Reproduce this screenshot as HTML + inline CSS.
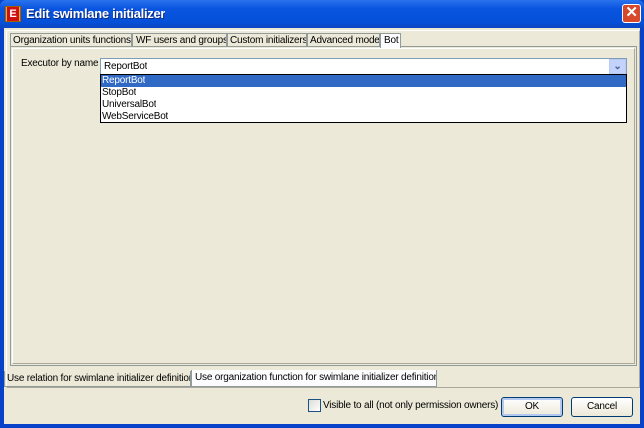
<!DOCTYPE html>
<html><head><style>
*{margin:0;padding:0;box-sizing:border-box}
body{width:644px;height:428px;overflow:hidden;background:#0842c8;font-family:"Liberation Sans",sans-serif;font-size:10px;letter-spacing:-0.2px;color:#000;position:relative}
div{position:absolute}
.t{white-space:nowrap;overflow:hidden}
</style></head><body>
<div style="left:0;top:0;width:644px;height:28px;background:linear-gradient(#2a73ee,#0a55e0 30%,#0550d8 80%,#0a46c0);border-radius:6px 6px 0 0"></div>
<div style="left:5px;top:6px;width:16px;height:16px;background:#e8b020;border:1px solid #a06000"></div>
<div style="left:7px;top:7px;width:12px;height:14px;background:#d01010;color:#fff;font-weight:bold;font-size:11px;text-align:center;line-height:14px">E</div>
<div class="t" style="left:26px;top:6px;color:#fff;font-weight:bold;font-size:13px;letter-spacing:-0.3px;text-shadow:1px 1px #0a2a80">Edit swimlane initializer</div>
<div style="left:622px;top:4px;width:19px;height:19px;background:#d8482a;border:1px solid #fff;border-radius:3px;color:#fff;font-weight:bold;font-size:15px;text-align:center;line-height:16px">✕</div>
<div style="left:4px;top:28px;width:636px;height:396px;background:#ece9d8"></div>
<div style="left:6px;top:30px;width:634px;height:358px;border:1px solid #fff;border-right-color:#aca899;border-bottom-color:#aca899"></div>
<div style="left:10px;top:46px;width:627px;height:320px;border:1px solid #919b9c;background:#ece9d8"></div>
<div style="left:12px;top:48px;width:623px;height:316px;border:1px solid #fff;border-right-color:#aca899;border-bottom-color:#aca899"></div>
<div class="t" style="left:10px;top:33px;height:14px;width:122px;border:1px solid #919b9c;border-bottom:none;padding:0 2px;line-height:13px">Organization units functions</div>
<div class="t" style="left:132px;top:33px;height:14px;width:95px;border:1px solid #919b9c;border-bottom:none;padding:0 3px;line-height:13px">WF users and groups</div>
<div class="t" style="left:227px;top:33px;height:14px;width:80px;border:1px solid #919b9c;border-bottom:none;padding:0 2px;line-height:13px">Custom initializers</div>
<div class="t" style="left:307px;top:33px;height:14px;width:73px;border:1px solid #919b9c;border-bottom:none;padding:0 2px;line-height:13px">Advanced mode</div>
<div class="t" style="left:380px;top:33px;height:15px;width:21px;border:1px solid #919b9c;border-bottom:none;background:#fcfcfe;padding:0 3px;line-height:13px">Bot</div>
<div class="t" style="left:21px;top:58px">Executor by name</div>
<div style="left:100px;top:58px;width:527px;height:17px;border:1px solid #7f9db9;background:#fff"></div>
<div class="t" style="left:104px;top:61px">ReportBot</div>
<div style="left:609px;top:59px;width:17px;height:15px;background:#c3d3fd;border:1px solid #b9c9ef;color:#4d6185;font-size:10px;text-align:center;line-height:14px;font-weight:bold">⌄</div>
<div style="left:100px;top:74px;width:527px;height:49px;border:1px solid #000;background:#fff"></div>
<div style="left:101px;top:75px;width:525px;height:12px;background:#316ac5"></div>
<div class="t" style="left:102px;top:75px;line-height:12px;color:#fff">ReportBot</div>
<div class="t" style="left:102px;top:87px;line-height:12px">StopBot</div>
<div class="t" style="left:102px;top:99px;line-height:12px">UniversalBot</div>
<div class="t" style="left:102px;top:111px;line-height:12px">WebServiceBot</div>
<div class="t" style="left:4px;top:371px;height:16px;width:187px;border:1px solid #919b9c;border-top:none;padding:0 2px;line-height:15px">Use relation for swimlane initializer definition</div>
<div class="t" style="left:191px;top:370px;height:17px;width:246px;border:1px solid #919b9c;border-top:none;background:#fcfcfe;padding:0 3px;line-height:16px">Use organization function for swimlane initializer definition</div>
<div style="left:308px;top:399px;width:13px;height:13px;border:1px solid #1c5180;background:linear-gradient(135deg,#dcdcd7,#fff)"></div>
<div class="t" style="left:323px;top:400px">Visible to all (not only permission owners)</div>
<div style="left:501px;top:397px;width:62px;height:20px;border:1px solid #003c74;border-radius:3px;background:linear-gradient(#fff,#ece9d8);box-shadow:inset 0 0 0 2px #b4c9f0;text-align:center;line-height:18px">OK</div>
<div style="left:571px;top:397px;width:62px;height:20px;border:1px solid #003c74;border-radius:3px;background:linear-gradient(#fff,#ece9d8);text-align:center;line-height:18px">Cancel</div>
</body></html>
